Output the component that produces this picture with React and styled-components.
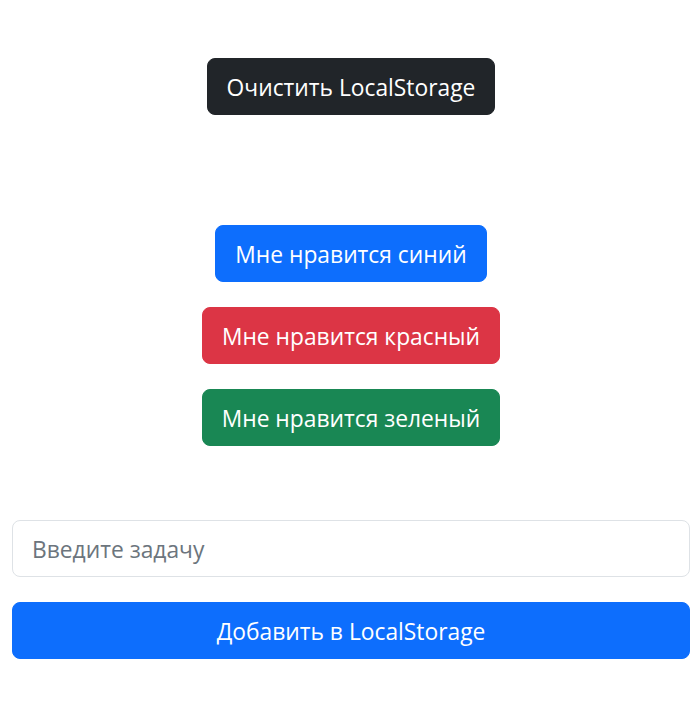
import React from "react";
import styled, { createGlobalStyle } from "styled-components";

const Global = createGlobalStyle`
	body {
		margin: 0;
		background: #fff;
		font-family: "Open Sans", "Noto Sans", sans-serif;
	}
`;

const Page = styled.div`
	display: flex;
	flex-flow: column;
	padding: 58px 10px 40px 12px;
`;

const Center = styled.div`
	display: flex;
	flex-flow: column;
	align-items: center;
	gap: 25px;
	margin-top: ${(p) => p.$top || 0}px;
`;

const colors = {
	dark: "#212529",
	primary: "#0d6efd",
	danger: "#dc3545",
	success: "#198754",
};

const Button = styled.button`
	font-family: inherit;
	font-size: 22.8px;
	line-height: 36px;
	padding: 11px 19px 8px;
	border: 1px solid ${(p) => colors[p.$variant]};
	border-radius: 8px;
	background: ${(p) => colors[p.$variant]};
	color: #fff;
	cursor: pointer;
	width: ${(p) => (p.$block ? "100%" : "auto")};
`;

const Input = styled.input`
	font-family: inherit;
	font-size: 22.8px;
	line-height: 36px;
	padding: 11px 19px 8px;
	border: 1px solid #dee2e6;
	border-radius: 8px;
	color: #212529;
	outline: none;
	width: 100%;
	box-sizing: border-box;

	&::placeholder {
		color: #6c757d;
	}
`;

const Form = styled.div`
	display: flex;
	flex-flow: column;
	gap: 25px;
	margin-top: 74px;
`;

export default function App() {
	return (
		<>
			<Global />
			<Page>
				<Center>
					<Button $variant="dark">Очистить LocalStorage</Button>
				</Center>
				<Center $top={110}>
					<Button $variant="primary">Мне нравится синий</Button>
					<Button $variant="danger">Мне нравится красный</Button>
					<Button $variant="success">Мне нравится зеленый</Button>
				</Center>
				<Form>
					<Input placeholder="Введите задачу" />
					<Button $variant="primary" $block>
						Добавить в LocalStorage
					</Button>
				</Form>
			</Page>
		</>
	);
}
